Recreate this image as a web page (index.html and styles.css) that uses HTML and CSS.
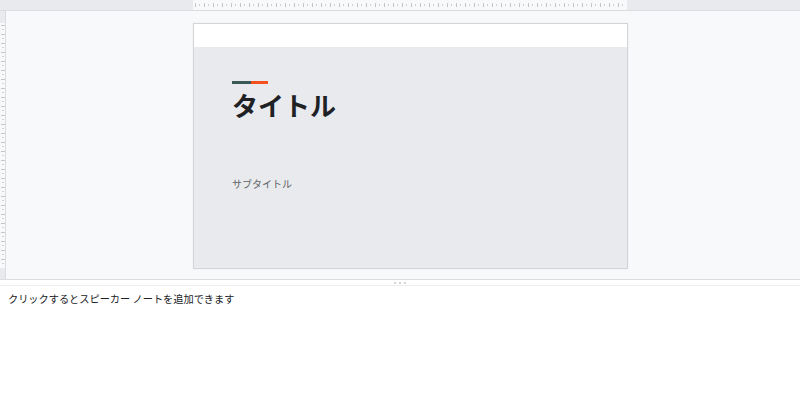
FILE: index.html
```html
<!DOCTYPE html>
<html lang="ja">
<head>
<meta charset="utf-8">
<title>Slides</title>
<link rel="stylesheet" href="styles.css">
</head>
<body>
<div class="app">
  <div class="top-ruler">
    <div class="ruler-pad-left"></div>
    <div class="ruler-h"></div>
    <div class="ruler-pad-right"></div>
  </div>
  <div class="editor">
    <div class="left-ruler">
      <div class="lr-pad-top"></div>
      <div class="ruler-v"></div>
      <div class="lr-pad-bottom"></div>
    </div>
    <div class="canvas">
      <div class="slide">
        <div class="slide-header"></div>
        <div class="slide-body">
          <div class="accent"><span class="accent-dark"></span><span class="accent-orange"></span></div>
          <h1 class="title">タイトル</h1>
          <p class="subtitle">サブタイトル</p>
        </div>
      </div>
    </div>
  </div>
  <div class="divider">
    <span class="dot"></span><span class="dot"></span><span class="dot"></span>
  </div>
  <div class="notes">クリックするとスピーカー ノートを追加できます</div>
</div>
</body>
</html>
```
FILE: styles.css
```css
* { box-sizing: border-box; }
html, body { margin: 0; padding: 0; }
body {
  font-family: "Noto Sans CJK JP", "Noto Sans", sans-serif;
  background: #ffffff;
  color: #202124;
  width: 800px;
  height: 398px;
  overflow: hidden;
}
.app { display: flex; flex-direction: column; height: 398px; }

.top-ruler {
  display: flex;
  height: 11px;
  border-bottom: 1px solid #dadce0;
  background: #e8eaed;
}
.ruler-pad-left { width: 193px; background: #e8eaed; }
.ruler-pad-right { flex: 1; background: #e8eaed; }
.ruler-h {
  width: 434px;
  background-color: #f8f9fa;
  background-image:
    repeating-linear-gradient(to right, transparent 0 2px, #c4c7c9 2px 3px, transparent 3px 9px),
    repeating-linear-gradient(to right, transparent 0 6px, #d0d3d6 6px 7px, transparent 7px 9px);
  background-size: 100% 4px, 100% 2px;
  background-position: 0 3px, 0 4px;
  background-repeat: repeat-x;
}

.editor { display: flex; height: 268px; }
.left-ruler {
  width: 6px;
  display: flex;
  flex-direction: column;
  background: #e8eaed;
  border-right: 1px solid #dadce0;
}
.lr-pad-top { height: 12px; }
.lr-pad-bottom { flex: 1; }
.ruler-v {
  height: 245px;
  background-color: #f8f9fa;
  background-image:
    repeating-linear-gradient(to bottom, transparent 0 2px, #c4c7c9 2px 3px, transparent 3px 9px),
    repeating-linear-gradient(to bottom, transparent 0 6px, #d0d3d6 6px 7px, transparent 7px 9px);
  background-size: 4px 100%, 2px 100%;
  background-position: 1px 0, 2px 0;
  background-repeat: repeat-y;
}
.canvas {
  flex: 1;
  background: #f8f9fa;
  padding: 12px 0 0 187px;
}
.slide {
  width: 435px;
  height: 246px;
  border: 1px solid #d3d5d8;
  box-shadow: 0 0 1px rgba(60,64,67,0.15);
  display: flex;
  flex-direction: column;
  background: #e8eaed;
}
.slide-header { height: 23px; background: #ffffff; }
.slide-body {
  flex: 1;
  background: #e8eaed;
  padding: 34px 0 0 38px;
}
.accent { display: flex; height: 3px; width: 36px; }
.accent-dark { width: 19px; background: #3c5a55; }
.accent-orange { flex: 1; background: #f4511e; }
.title {
  margin: 6px 0 0 0;
  font-size: 26px;
  line-height: 30px;
  font-weight: 700;
  color: #202124;
}
.subtitle {
  margin: 57px 0 0 0;
  font-size: 10px;
  line-height: 14px;
  font-weight: 400;
  color: #5f6368;
}

.divider {
  height: 7px;
  border-top: 1px solid #dadce0;
  border-bottom: 1px solid #eceff1;
  background: #ffffff;
  display: flex;
  justify-content: center;
  align-items: center;
  gap: 3px;
}
.dot { width: 2px; height: 2px; border-radius: 1px; background: #c4c7c9; }

.notes {
  padding: 6px 8px 0 8px;
  font-size: 10.2px;
  line-height: 14px;
  color: #202124;
}
```
